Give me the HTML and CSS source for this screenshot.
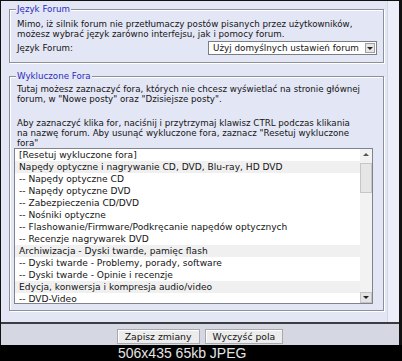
FILE: index.html
```html
<!DOCTYPE html>
<html lang="pl">
<head>
  <meta charset="UTF-8">
  <title>Opcje forum</title>
  <link rel="stylesheet" href="styles.css">
</head>
<body>
  <div class="shot">
    <div class="window">
      <div class="panel">
        <div class="content">
          <fieldset class="box">
            <legend>Język Forum</legend>
            <p class="note">Mimo, iż silnik forum nie przetłumaczy postów pisanych przez użytkowników,<br>możesz wybrać język zarówno interfejsu, jak i pomocy forum.</p>
            <div class="row">
              <label class="label">Język Forum:</label>
              <div class="select">
                <span class="select-text">Użyj domyślnych ustawień forum</span>
                <span class="select-btn"><i class="tri tri-down"></i></span>
              </div>
            </div>
          </fieldset>

          <fieldset class="box box-fora">
            <legend>Wykluczone Fora</legend>
            <p class="note">Tutaj możesz zaznaczyć fora, których nie chcesz wyświetlać na stronie głównej<br>forum, w "Nowe posty" oraz "Dzisiejsze posty".</p>
            <p class="note note-gap">Aby zaznaczyć klika for, naciśnij i przytrzymaj klawisz CTRL podczas klikania<br>na nazwę forum. Aby usunąć wykluczone fora, zaznacz "Resetuj wykluczone<br>fora"</p>
            <div class="listbox">
              <ul class="options">
                <li>[Resetuj wykluczone fora]</li>
                <li class="cat">Napędy optyczne i nagrywanie CD, DVD, Blu-ray, HD DVD</li>
                <li>-- Napędy optyczne CD</li>
                <li>-- Napędy optyczne DVD</li>
                <li>-- Zabezpieczenia CD/DVD</li>
                <li>-- Nośniki optyczne</li>
                <li>-- Flashowanie/Firmware/Podkręcanie napędów optycznych</li>
                <li>-- Recenzje nagrywarek DVD</li>
                <li class="cat">Archiwizacja - Dyski twarde, pamięc flash</li>
                <li>-- Dyski twarde - Problemy, porady, software</li>
                <li>-- Dyski twarde - Opinie i recenzje</li>
                <li class="cat">Edycja, konwersja i kompresja audio/video</li>
                <li>-- DVD-Video</li>
              </ul>
              <div class="scrollbar">
                <span class="sb-btn"><i class="tri tri-up"></i></span>
                <span class="sb-track"><span class="sb-thumb"></span></span>
                <span class="sb-btn sb-btn-down"><i class="tri tri-down"></i></span>
              </div>
            </div>
          </fieldset>
        </div>
        <div class="side"></div>
      </div>
      <div class="actions">
        <button class="btn">Zapisz zmiany</button>
        <button class="btn">Wyczyść pola</button>
      </div>
    </div>
    <div class="caption">506x435 65kb JPEG</div>
  </div>
</body>
</html>
```

FILE: styles.css
```css
* {
  box-sizing: border-box;
}

body {
  margin: 0;
  background: #000;
  font-family: "DejaVu Sans", Verdana, sans-serif;
  color: #141414;
}

.shot {
  width: 402px;
  height: 361px;
  background: #111;
  padding-top: 1px;
}

.window {
  margin: 0 3px 0 1px;
  height: 344px;
  display: flex;
  flex-direction: column;
}

.panel {
  height: 323px;
  display: flex;
  background: #e3e6f4;
  border-bottom: 2px solid #3c3c40;
}

.content {
  flex: 1;
  min-width: 0;
}

.side {
  width: 12px;
  background: #eceef9;
  border-left: 1px solid #d3d6e4;
}

/* fieldsets */
.box {
  margin: 3px 3px 0 8px;
  padding: 6px 6px 7px 2px;
  border: 1px solid #8c8e98;
  box-shadow: 1px 1px 0 #fff, inset 1px 1px 0 #fff;
  min-width: 0;
}

.box legend {
  margin-left: 4px;
  padding: 0 1px;
  font-size: 8.7px;
  line-height: 10px;
  color: #2b2bc0;
  background: #e3e6f4;
}

.box-fora {
  margin-top: 8px;
  padding-top: 4px;
  padding-bottom: 6px;
}

.note {
  margin: 0;
  padding-left: 5px;
  font-size: 8.7px;
  line-height: 9.6px;
  white-space: nowrap;
}

.note-gap {
  margin-top: 15px;
}

.row {
  margin-top: 2px;
  height: 14px;
  display: flex;
  align-items: center;
  justify-content: space-between;
}

.label {
  padding-left: 5px;
  font-size: 8.7px;
}

.select {
  width: 169px;
  height: 14px;
  display: flex;
  align-items: center;
  justify-content: space-between;
  background: #fff;
  border: 1px solid #7c7e86;
  padding-left: 4px;
  font-size: 8.8px;
  white-space: nowrap;
  overflow: hidden;
}

.select-text {
  line-height: 12px;
}

.select-btn {
  flex: none;
  width: 10px;
  height: 10px;
  margin-right: 1px;
  display: flex;
  align-items: center;
  justify-content: center;
  background: #e6e6e6;
  border: 1px solid #a0a0a0;
}

.tri {
  width: 0;
  height: 0;
  border-left: 3px solid transparent;
  border-right: 3px solid transparent;
}

.tri-down {
  border-top: 3px solid #222;
}

.tri-up {
  border-bottom: 3px solid #555;
}

/* forum list */
.listbox {
  margin: 0 4px 0 2px;
  height: 156px;
  display: flex;
  background: #fff;
  border: 1px solid #80838c;
  overflow: hidden;
}

.options {
  flex: 1;
  margin: 0;
  padding: 0;
  list-style: none;
  overflow: hidden;
}

.options li {
  height: 12px;
  line-height: 12px;
  padding-left: 4px;
  font-size: 9.1px;
  white-space: nowrap;
}

.options .cat {
  background: #f0f0f0;
}

.scrollbar {
  width: 12px;
  display: flex;
  flex-direction: column;
  background: #f2f2f2;
}

.sb-btn {
  height: 11px;
  display: flex;
  align-items: center;
  justify-content: center;
}

.sb-btn-down {
  background: #e4e4e4;
  border: 1px solid #c4c4c4;
}

.sb-track {
  flex: 1;
  padding-top: 3px;
}

.sb-thumb {
  display: block;
  height: 30px;
  background: #e6e6e6;
  border: 1px solid #c6c6c6;
}

/* bottom bar */
.actions {
  flex: 1;
  display: flex;
  justify-content: center;
  align-items: flex-start;
  gap: 5px;
  padding-top: 5px;
  background: #d5d8e2;
}

.btn {
  height: 15px;
  padding: 0 7px;
  font-family: "DejaVu Sans", Verdana, sans-serif;
  font-size: 9.3px;
  line-height: 13px;
  color: #141414;
  background: #ececec;
  border: 1px solid #a9a9ad;
  box-shadow: inset 1px 1px 0 #fff;
}

.caption {
  height: 16px;
  padding-left: 118px;
  font-family: "Liberation Sans", Arial, sans-serif;
  font-size: 14px;
  line-height: 16px;
  color: #e4e4e4;
  background: #000;
}
```
